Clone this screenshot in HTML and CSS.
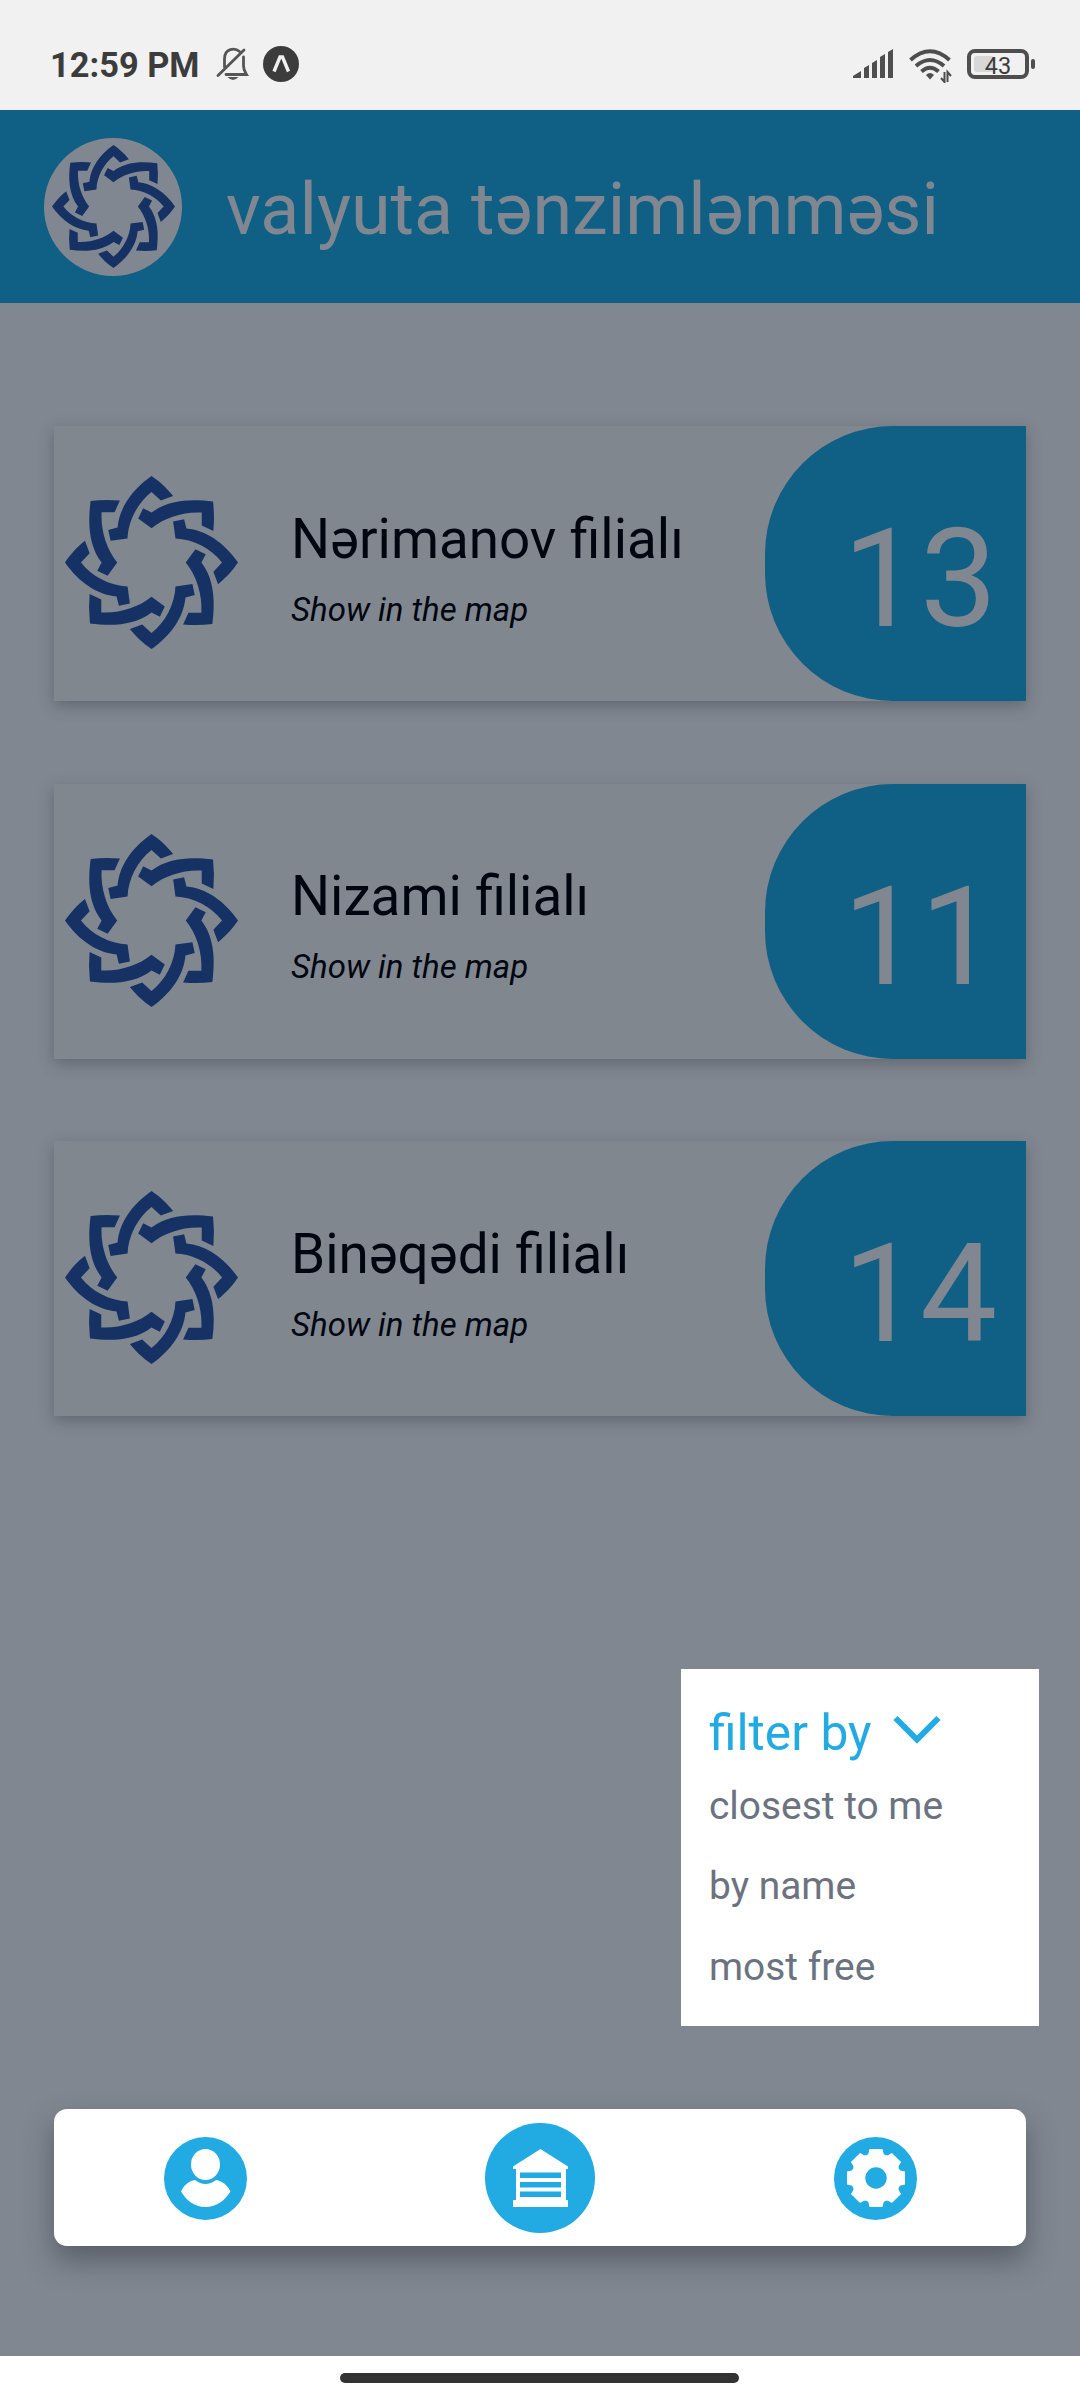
FILE: index.html
```html
<!DOCTYPE html>
<html lang="en">
<head>
<meta charset="utf-8">
<title>valyuta tənzimlənməsi</title>
<link rel="stylesheet" href="styles.css">
</head>
<body>
<svg width="0" height="0" class="defs">
  <defs>
    <g id="strand">
      <path d="M275 18C215 60 178 115 173 173L145 180L152 213L203 206C205 152 234 98 275 66L303 92L340 78C320 53 300 35 275 18Z"/>
      <path d="M250 115L235 146L275 175C315 143 370 125 426 128V167L461 183Q465 140 460 95C390 86 325 90 275 128Z"/>
    </g>
    <symbol id="star" viewBox="15 18 520 520">
      <use href="#strand"/>
      <use href="#strand" transform="rotate(90 275 278)"/>
      <use href="#strand" transform="rotate(180 275 278)"/>
      <use href="#strand" transform="rotate(270 275 278)"/>
    </symbol>
  </defs>
</svg>
<div class="screen">
  <div class="status">
    <span class="time">12:59 PM</span>
    <svg class="bell" width="34" height="36" viewBox="0 0 34 36" fill="none" stroke="#555" stroke-width="2.8" stroke-linecap="round">
      <path d="M8.500 21V13C8.500 2 19 1.500 23.500 5.500M27.500 11V20C27.500 24 29 26 30.500 28.500H10M2 29.500L28 4"/>
      <path d="M11.500 31H22.500Q17 37 11.500 31Z" fill="#555" stroke="none"/>
    </svg>
    <svg class="expo" width="36" height="36" viewBox="0 0 36 36">
      <circle cx="18" cy="18" r="18" fill="#3c3c3c"/>
      <path d="M11 25.500L17 11H19.500L25.500 25.500" fill="none" stroke="#f1f1f1" stroke-width="3.4"/>
    </svg>
    <svg class="signal" width="41" height="30" viewBox="0 0 41 30" fill="#4e4e4e">
      <path d="M0 29V27L8 22V29ZM11 29V19L16 16V29ZM19 29V14L24 11V29ZM27 29V8L32 5V29ZM35 29V3L40 0V29Z"/>
    </svg>
    <svg class="wifi" width="44" height="34" viewBox="0 0 44 34" fill="none" stroke="#4e4e4e" stroke-width="4">
      <path d="M1.500 11Q21 -6.500 40.500 11M7 17Q21 5 35 17M12.500 22.500Q21 15 29.500 22.500"/>
      <path d="M17 26Q21 22 25 26L21 30.500Z" fill="#4e4e4e" stroke="none"/>
      <path d="M35.500 23V33L32 29M38.500 33V23L42 27" stroke-width="2"/>
    </svg>
    <div class="battery"><i></i><span>43</span></div>
  </div>
  <header class="header">
    <div class="avatar"><svg class="star" width="123" height="123"><use href="#star"/></svg></div>
    <h1>valyuta tənzimlənməsi</h1>
  </header>
  <main class="main">
    <article class="card">
      <svg class="star" width="173" height="173"><use href="#star"/></svg>
      <div class="info"><h2>Nərimanov filialı</h2><p>Show in the map</p></div>
      <div class="count">13</div>
    </article>
    <article class="card">
      <svg class="star" width="173" height="173"><use href="#star"/></svg>
      <div class="info"><h2>Nizami filialı</h2><p>Show in the map</p></div>
      <div class="count">11</div>
    </article>
    <article class="card">
      <svg class="star" width="173" height="173"><use href="#star"/></svg>
      <div class="info"><h2>Binəqədi filialı</h2><p>Show in the map</p></div>
      <div class="count">14</div>
    </article>
    <nav class="nav">
      <svg width="83" height="83" viewBox="0 0 83 83">
        <circle cx="41.5" cy="41.5" r="41.5" fill="#22abe2"/>
        <ellipse cx="41.5" cy="27.5" rx="14.5" ry="15.5" fill="#fff"/>
        <path d="M31 43Q41.500 51 52 43C59 44 64 49 66.500 54.500C61 63 53 70 41.500 70S22 63 17 54.500C20 48 25 44 31 43Z" fill="#fff"/>
      </svg>
      <svg class="tab-main" width="110" height="110" viewBox="0 0 110 110">
        <circle cx="55" cy="55" r="55" fill="#22abe2"/>
        <path d="M55.500 26L83 43.500V46H81V77H83V84H28V77H31V46H28V43.500Z" fill="#fff"/>
        <path d="M35 49.500H76V55H35ZM35 59H76V64.500H35ZM35 68.500H76V74H35Z" fill="#22abe2"/>
      </svg>
      <svg width="83" height="83" viewBox="0 0 83 83">
        <circle cx="41.500" cy="41.500" r="41.500" fill="#22abe2"/>
        <g fill="#fff" transform="translate(42 41)">
          <circle r="24"/>
          <path id="tooth" d="M-6.500 -29H6.500L7.500 -24.500L11 -21H-11L-7.500 -24.500Z"/>
          <use href="#tooth" transform="rotate(45)"/>
          <use href="#tooth" transform="rotate(90)"/>
          <use href="#tooth" transform="rotate(135)"/>
          <use href="#tooth" transform="rotate(180)"/>
          <use href="#tooth" transform="rotate(225)"/>
          <use href="#tooth" transform="rotate(270)"/>
          <use href="#tooth" transform="rotate(315)"/>
        </g>
        <circle cx="42" cy="41" r="10.700" fill="#22abe2"/>
      </svg>
    </nav>
    <div class="menu">
      <div class="menu-title">filter by
        <svg width="48" height="30" viewBox="0 0 48 30"><path d="M2.500 3L24 24.500L45.500 3" fill="none" stroke="#22abe2" stroke-width="6"/></svg>
      </div>
      <div class="option">closest to me</div>
      <div class="option">by name</div>
      <div class="option">most free</div>
    </div>
  </main>
  <footer class="home"><i></i></footer>
</div>
</body>
</html>
```
FILE: styles.css
```css
* { box-sizing: border-box; margin: 0; padding: 0; font-weight: 400; }
body { font-family: Roboto, sans-serif; }
svg { display: block; flex: none; }
.defs { position: absolute; }
.screen { width: 1080px; height: 2400px; display: flex; flex-direction: column; overflow: hidden; background: #808790; }
.status { height: 110px; background: #f1f1f1; display: flex; align-items: flex-start; padding: 46px 45px 0 50px; color: #3c3c3c; }
.time { font-size: 34.400px; font-weight: 700; line-height: 38px; width: 166px; white-space: nowrap; }
.expo { margin-left: 13px; }
.signal { margin: 3px 0 0 554px; }
.wifi { margin: 3px 0 0 15px; }
.battery { position: relative; width: 62px; height: 30px; margin: 3px 0 0 14px; border: 4px solid #4e4e4e; border-radius: 8px; display: flex; align-items: center; justify-content: center; font-size: 23.500px; line-height: 22px; }
.battery span { position: relative; padding-top: 3px; }
.battery i { position: absolute; left: 3px; top: 3px; width: 20px; height: 16px; border-radius: 3px; background: #d8d8d8; }
.battery::after { content: ""; position: absolute; left: 60px; top: 6px; width: 4px; height: 10px; border-radius: 2px; background: #4e4e4e; }
.header { height: 193px; background: #105f84; display: flex; align-items: center; padding-left: 44px; color: #808790; }
.avatar { width: 138px; height: 138px; border-radius: 50%; background: #808790; display: flex; align-items: center; justify-content: center; }
.star { fill: #163265; }
h1 { font-size: 71.900px; margin-left: 44px; padding-top: 7px; line-height: 84px; white-space: nowrap; }
.main { position: relative; flex: 1; padding: 123px 54px 110px; display: flex; flex-direction: column; gap: 82.500px; }
.card { height: 275px; display: flex; align-items: center; padding-left: 11px; background: #80878f; box-shadow: 0 5px 14px rgba(40, 46, 56, .34); color: #00060f; }
.card .star { margin-bottom: 2px; }
.info { margin-left: 53px; padding-top: 8px; flex: 1; white-space: nowrap; }
h2 { font-size: 54.800px; line-height: 65px; }
.info p { font-size: 33px; font-style: italic; line-height: 39px; margin-top: 18px; }
.count { width: 261px; height: 275px; border-radius: 128px 0 0 128px; background: #105f84; color: #808790; font-size: 137.500px; line-height: 306px; text-align: center; padding-left: 49px; }
.nav { height: 137px; margin-top: auto; background: #fff; border-radius: 13px; display: flex; align-items: center; justify-content: space-between; padding: 2px 109.500px 0 110px; box-shadow: 0 14px 28px rgba(50, 54, 64, .5); }
.tab-main { margin-bottom: 2px; }
.menu { position: absolute; left: 681px; top: 1366px; width: 358px; height: 357px; background: #fff; padding: 35px 28px; color: #6b7280; }
.menu-title { display: flex; align-items: center; gap: 21px; color: #22abe2; font-size: 49.700px; line-height: 58px; height: 79px; padding-bottom: 21px; }
.menu-title svg { margin-bottom: 6px; }
.option { font-size: 38.900px; line-height: 46px; height: 80.300px; white-space: nowrap; }
.home { height: 44px; background: #fff; display: flex; justify-content: center; padding: 17px 2px 0 0; }
.home i { width: 399px; height: 10px; border-radius: 5px; background: #333; }
```
